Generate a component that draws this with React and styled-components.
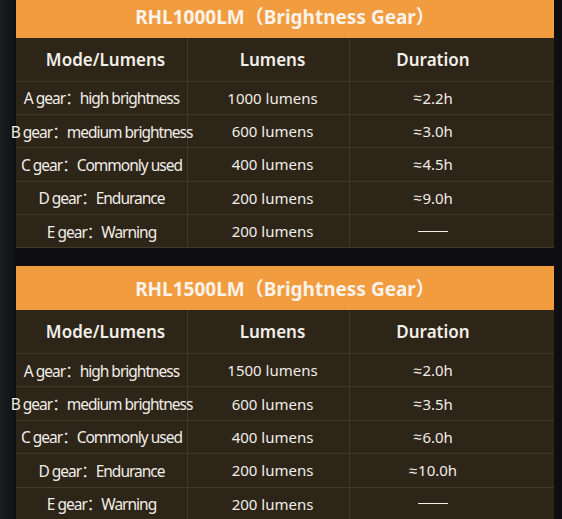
import React from 'react'
import styled, { createGlobalStyle } from 'styled-components'

const GlobalStyle = createGlobalStyle`
  html, body {
    margin: 0;
    padding: 0;
    background: #0e0e10;
  }
  body {
    font-family: 'Noto Sans', 'Noto Sans CJK SC', sans-serif;
    color: #f3efe9;
  }
`

const tables = [
  {
    title: 'RHL1000LM（Brightness Gear）',
    rows: [
      ['A gear：high brightness', '1000 lumens', '2.2h'],
      ['B gear：medium brightness', '600 lumens', '3.0h'],
      ['C gear：Commonly used', '400 lumens', '4.5h'],
      ['D gear：Endurance', '200 lumens', '9.0h'],
      ['E gear：Warning', '200 lumens', null],
    ],
  },
  {
    title: 'RHL1500LM（Brightness Gear）',
    rows: [
      ['A gear：high brightness', '1500 lumens', '2.0h'],
      ['B gear：medium brightness', '600 lumens', '3.5h'],
      ['C gear：Commonly used', '400 lumens', '6.0h'],
      ['D gear：Endurance', '200 lumens', '10.0h'],
      ['E gear：Warning', '200 lumens', null],
    ],
  },
]

const App = () => {
  return (
    <>
      <GlobalStyle />
      <Page>
        {tables.map((t) => (
          <Table key={t.title}>
            <Title>{t.title}</Title>
            <Grid>
              <HeadCell $col={0}>Mode/Lumens</HeadCell>
              <HeadCell $col={1}>Lumens</HeadCell>
              <HeadCell $col={2}>Duration</HeadCell>
              {t.rows.map((r, i) => (
                <React.Fragment key={i}>
                  <Cell $col={0}>{r[0]}</Cell>
                  <Cell $col={1}>{r[1]}</Cell>
                  <Cell $col={2}>
                    {r[2] ? (
                      <>
                        <Approx>≈</Approx>
                        {r[2]}
                      </>
                    ) : (
                      <Dash />
                    )}
                  </Cell>
                </React.Fragment>
              ))}
            </Grid>
          </Table>
        ))}
      </Page>
    </>
  )
}

export default App

const headPad = ['0 0 0 8px', '0 0 0 8px', '0 38px 0 0']
const cellPad = ['0', '0 0 0 8px', '0 38px 0 0']

const Page = styled.div`
  width: 562px;
  height: 519px;
  overflow: hidden;
  box-sizing: border-box;
  padding: 0 8px 0 16px;
  display: flex;
  flex-direction: column;
  gap: 18px;
  background: linear-gradient(90deg, #1b1d1e 0, #111214 14px, #0e0e10 16px);

  & > *:first-child {
    margin-top: -6px;
  }
`

const Table = styled.section`
  display: flex;
  flex-direction: column;
  background: #2e2519;
  flex-shrink: 0;
`

const Title = styled.div`
  height: 44px;
  background: #f29c40;
  display: flex;
  align-items: center;
  justify-content: center;
  font-size: 19px;
  font-weight: 700;
  color: #fbf3ea;
`

const Grid = styled.div`
  display: grid;
  grid-template-columns: 172px 162px 1fr;
  grid-auto-rows: 33.4px;
  grid-template-rows: 43.5px;
`

const BaseCell = styled.div`
  display: flex;
  align-items: center;
  justify-content: center;
  box-sizing: border-box;
  white-space: nowrap;
  border-right: ${(p) => (p.$col === 2 ? 'none' : '1px solid #43382a')};
  border-bottom: 1px solid #43382a;
`

const HeadCell = styled(BaseCell)`
  padding: ${(p) => headPad[p.$col]};
  font-size: 17px;
  font-weight: 600;
`

const Cell = styled(BaseCell)`
  padding: ${(p) => cellPad[p.$col]};
  font-size: ${(p) => (p.$col === 0 ? '15.5px' : '15px')};
  letter-spacing: ${(p) => (p.$col === 0 ? '-1px' : '0')};
  color: #f1ede7;
`

const Approx = styled.span`
  font-family: 'Liberation Sans', sans-serif;
  margin-right: 1px;
`

const Dash = styled.span`
  display: block;
  width: 30px;
  height: 1.5px;
  background: #f1ede7;
`
